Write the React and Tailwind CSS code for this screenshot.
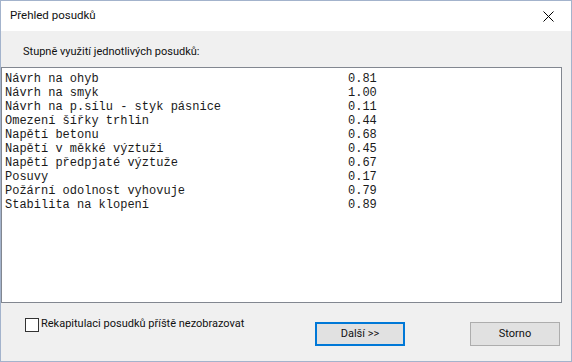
import React from "react";

const rows = [
  ["Návrh na ohyb", "0.81"],
  ["Návrh na smyk", "1.00"],
  ["Návrh na p.sílu - styk pásnice", "0.11"],
  ["Omezení šířky trhlin", "0.44"],
  ["Napětí betonu", "0.68"],
  ["Napětí v měkké výztuži", "0.45"],
  ["Napětí předpjaté výztuže", "0.67"],
  ["Posuvy", "0.17"],
  ["Požární odolnost vyhovuje", "0.79"],
  ["Stabilita na klopení", "0.89"],
];

const ui = { fontFamily: 'Roboto, "Liberation Sans", Arial, sans-serif' };
const mono = { fontFamily: '"Liberation Mono", "Courier New", monospace' };

const App = () => {
  return (
    <div
      className="w-[572px] h-[362px] border border-[#a3b3cc] flex flex-col bg-[#f0f0f0] text-[#111] text-[11px]"
      style={ui}
    >
      <div className="h-[30px] bg-white flex items-center pl-[9px] pr-[17px] text-[11.5px]">
        <span>Přehled posudků</span>
        <svg className="ml-auto" width="11" height="11" viewBox="0 0 11 11">
          <path d="M0.5 0.5 L10.5 10.5 M10.5 0.5 L0.5 10.5" stroke="#000" strokeWidth="1" fill="none" />
        </svg>
      </div>

      <div className="h-[36px] pl-[22px] pt-[13px]">Stupně využití jednotlivých posudků:</div>

      <div className="h-[236px] mr-[9px] bg-white border border-[#828790] pl-[3px] pt-[4px] text-[#1a1a1a]" style={mono}>
        {rows.map(([label, value]) => (
          <div className="flex h-[14px] leading-[14px] text-[12px]" key={label}>
            <span className="w-[343px] whitespace-pre">{label}</span>
            <span>{value}</span>
          </div>
        ))}
      </div>

      <div className="flex flex-1">
        <label className="flex items-center ml-[24px] mt-[14px] h-[15px]">
          <span className="w-[14px] h-[14px] border border-[#333] bg-white"></span>
          <span className="ml-[2px]">Rekapitulaci posudků příště nezobrazovat</span>
        </label>
        <div className="ml-auto mr-[11px] mt-[19px] flex gap-[65px]">
          <button className="w-[90px] h-[24px] bg-[#e1e1e1] border-2 border-[#0078d7]">Další &gt;&gt;</button>
          <button className="w-[90px] h-[24px] bg-[#e1e1e1] border border-[#adadad]">Storno</button>
        </div>
      </div>
    </div>
  );
};

export default App;
